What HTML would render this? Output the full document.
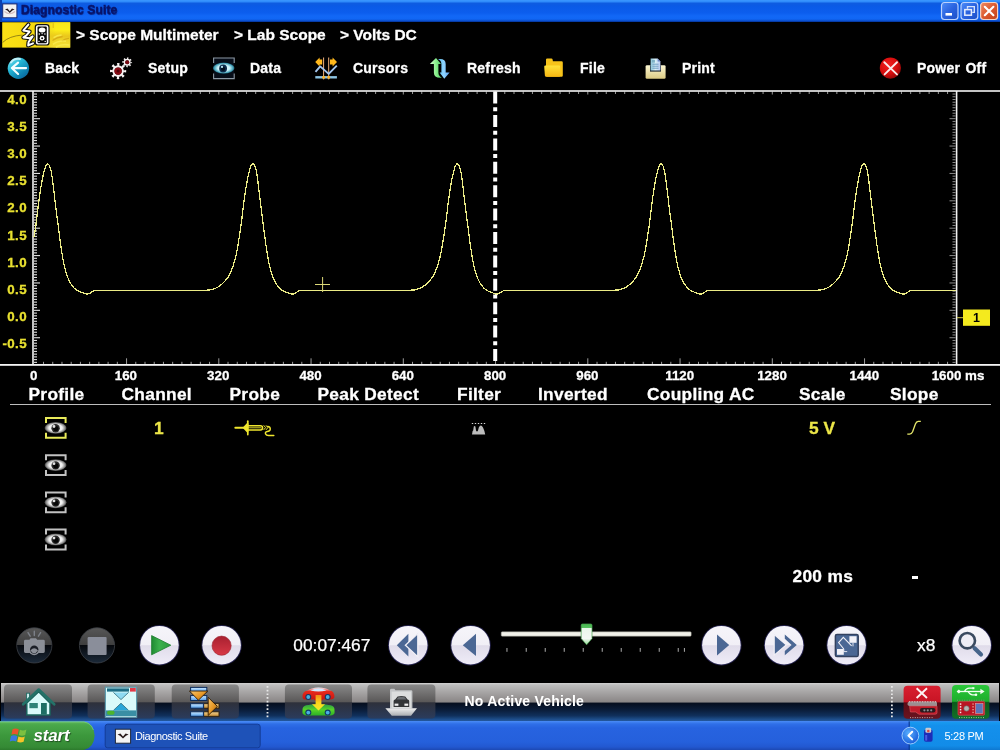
<!DOCTYPE html>
<html><head><meta charset="utf-8"><title>Diagnostic Suite</title>
<style>
*{box-sizing:border-box;margin:0;padding:0}
html,body{width:1000px;height:750px;overflow:hidden;background:#000}
body{position:relative;font-family:"Liberation Sans",sans-serif;color:#fff}
#wrap{position:absolute;left:0;top:0;width:1000px;height:750px;will-change:transform;transform:translateZ(0)}
.hd,.tb,.bc,.xl{-webkit-text-stroke:0.3px #fff}
.yl{-webkit-text-stroke:0.3px #e8e030}
.yv{-webkit-text-stroke:0.3px #ece648}
.abs{position:absolute}
#titlebar{position:absolute;left:0;top:0;width:1000px;height:22px;background:linear-gradient(to bottom,#3c98ff 0px,#2c88fa 2px,#0f5ce0 3px,#0a5ae6 6px,#0c5eee 13px,#1268f6 16px,#1066f4 19px,#0a4cca 21px,#032c86 22px)}
#titlebar .ttl{position:absolute;left:21px;top:3px;font-size:12px;font-weight:bold;color:#08146a;letter-spacing:0.15px;-webkit-text-stroke:0.45px #08146a;text-shadow:0.6px 0.6px 0.8px rgba(8,20,100,0.7);white-space:nowrap}
.bc{position:absolute;top:26px;font-size:15.5px;font-weight:bold;white-space:nowrap;line-height:18px}
.tb{position:absolute;top:60px;font-size:14px;font-weight:bold;white-space:nowrap;line-height:16px;letter-spacing:0.22px;word-spacing:1.2px}
.yl{position:absolute;left:0px;width:27px;text-align:right;letter-spacing:0.4px;font-size:13.33px;font-weight:bold;color:#e8e030;line-height:16px;white-space:nowrap}
.xl{position:absolute;top:368.3px;width:60px;text-align:center;font-size:13.33px;font-weight:bold;color:#fff;line-height:16px;white-space:nowrap}
.hd{position:absolute;top:384px;font-size:17.33px;font-weight:bold;white-space:nowrap;line-height:20px;letter-spacing:0.3px}
.yv{position:absolute;font-size:17.33px;font-weight:bold;color:#ece648;white-space:nowrap;line-height:20px}
svg{position:absolute;left:0;top:0;overflow:visible}
</style></head><body><div id="wrap">

<!-- ===== title bar ===== -->
<div id="titlebar">
  <div class="ttl">Diagnostic Suite</div>
</div>

<!-- ===== breadcrumb ===== -->
<div class="bc" style="left:76px">&gt; Scope Multimeter</div>
<div class="bc" style="left:234px">&gt; Lab Scope</div>
<div class="bc" style="left:340px">&gt; Volts DC</div>

<!-- ===== toolbar text ===== -->
<div class="tb" style="left:45px">Back</div>
<div class="tb" style="left:148px">Setup</div>
<div class="tb" style="left:250px">Data</div>
<div class="tb" style="left:353px">Cursors</div>
<div class="tb" style="left:467px">Refresh</div>
<div class="tb" style="left:580px">File</div>
<div class="tb" style="left:682px">Print</div>
<div class="tb" style="left:917px">Power Off</div>

<!-- ===== plot ===== -->
<div class="yl" style="top:91.5px">4.0</div><div class="yl" style="top:118.7px">3.5</div><div class="yl" style="top:145.9px">3.0</div><div class="yl" style="top:173.1px">2.5</div><div class="yl" style="top:200.3px">2.0</div><div class="yl" style="top:227.5px">1.5</div><div class="yl" style="top:254.7px">1.0</div><div class="yl" style="top:281.9px">0.5</div><div class="yl" style="top:309.1px">0.0</div><div class="yl" style="top:336.3px">-0.5</div>
<div class="xl" style="left:3.6px">0</div><div class="xl" style="left:95.9px">160</div><div class="xl" style="left:188.2px">320</div><div class="xl" style="left:280.5px">480</div><div class="xl" style="left:372.8px">640</div><div class="xl" style="left:465.1px">800</div><div class="xl" style="left:557.4px">960</div><div class="xl" style="left:649.7px">1120</div><div class="xl" style="left:742.0px">1280</div><div class="xl" style="left:834.3px">1440</div>
<div class="xl" style="left:928px">1600 ms</div>
<svg width="1000" height="750" viewBox="0 0 1000 750">
  <g stroke="#e0e0e0" stroke-width="1.1"><line x1="34.0" y1="94.04" x2="37.0" y2="94.04"/><line x1="34.0" y1="96.78" x2="37.0" y2="96.78"/><line x1="34.0" y1="99.51" x2="37.0" y2="99.51"/><line x1="34.0" y1="102.25" x2="37.0" y2="102.25"/><line x1="34.0" y1="104.99" x2="37.0" y2="104.99"/><line x1="34.0" y1="107.73" x2="37.0" y2="107.73"/><line x1="34.0" y1="110.47" x2="37.0" y2="110.47"/><line x1="34.0" y1="113.20" x2="37.0" y2="113.20"/><line x1="34.0" y1="115.94" x2="37.0" y2="115.94"/><line x1="34.0" y1="118.68" x2="40.0" y2="118.68"/><line x1="34.0" y1="121.42" x2="37.0" y2="121.42"/><line x1="34.0" y1="124.16" x2="37.0" y2="124.16"/><line x1="34.0" y1="126.89" x2="37.0" y2="126.89"/><line x1="34.0" y1="129.63" x2="37.0" y2="129.63"/><line x1="34.0" y1="132.37" x2="37.0" y2="132.37"/><line x1="34.0" y1="135.11" x2="37.0" y2="135.11"/><line x1="34.0" y1="137.85" x2="37.0" y2="137.85"/><line x1="34.0" y1="140.58" x2="37.0" y2="140.58"/><line x1="34.0" y1="143.32" x2="37.0" y2="143.32"/><line x1="34.0" y1="146.06" x2="40.0" y2="146.06"/><line x1="34.0" y1="148.80" x2="37.0" y2="148.80"/><line x1="34.0" y1="151.54" x2="37.0" y2="151.54"/><line x1="34.0" y1="154.27" x2="37.0" y2="154.27"/><line x1="34.0" y1="157.01" x2="37.0" y2="157.01"/><line x1="34.0" y1="159.75" x2="37.0" y2="159.75"/><line x1="34.0" y1="162.49" x2="37.0" y2="162.49"/><line x1="34.0" y1="165.23" x2="37.0" y2="165.23"/><line x1="34.0" y1="167.96" x2="37.0" y2="167.96"/><line x1="34.0" y1="170.70" x2="37.0" y2="170.70"/><line x1="34.0" y1="173.44" x2="40.0" y2="173.44"/><line x1="34.0" y1="176.18" x2="37.0" y2="176.18"/><line x1="34.0" y1="178.92" x2="37.0" y2="178.92"/><line x1="34.0" y1="181.65" x2="37.0" y2="181.65"/><line x1="34.0" y1="184.39" x2="37.0" y2="184.39"/><line x1="34.0" y1="187.13" x2="37.0" y2="187.13"/><line x1="34.0" y1="189.87" x2="37.0" y2="189.87"/><line x1="34.0" y1="192.61" x2="37.0" y2="192.61"/><line x1="34.0" y1="195.34" x2="37.0" y2="195.34"/><line x1="34.0" y1="198.08" x2="37.0" y2="198.08"/><line x1="34.0" y1="200.82" x2="40.0" y2="200.82"/><line x1="34.0" y1="203.56" x2="37.0" y2="203.56"/><line x1="34.0" y1="206.30" x2="37.0" y2="206.30"/><line x1="34.0" y1="209.03" x2="37.0" y2="209.03"/><line x1="34.0" y1="211.77" x2="37.0" y2="211.77"/><line x1="34.0" y1="214.51" x2="37.0" y2="214.51"/><line x1="34.0" y1="217.25" x2="37.0" y2="217.25"/><line x1="34.0" y1="219.99" x2="37.0" y2="219.99"/><line x1="34.0" y1="222.72" x2="37.0" y2="222.72"/><line x1="34.0" y1="225.46" x2="37.0" y2="225.46"/><line x1="34.0" y1="228.20" x2="40.0" y2="228.20"/><line x1="34.0" y1="230.94" x2="37.0" y2="230.94"/><line x1="34.0" y1="233.68" x2="37.0" y2="233.68"/><line x1="34.0" y1="236.41" x2="37.0" y2="236.41"/><line x1="34.0" y1="239.15" x2="37.0" y2="239.15"/><line x1="34.0" y1="241.89" x2="37.0" y2="241.89"/><line x1="34.0" y1="244.63" x2="37.0" y2="244.63"/><line x1="34.0" y1="247.37" x2="37.0" y2="247.37"/><line x1="34.0" y1="250.10" x2="37.0" y2="250.10"/><line x1="34.0" y1="252.84" x2="37.0" y2="252.84"/><line x1="34.0" y1="255.58" x2="40.0" y2="255.58"/><line x1="34.0" y1="258.32" x2="37.0" y2="258.32"/><line x1="34.0" y1="261.06" x2="37.0" y2="261.06"/><line x1="34.0" y1="263.79" x2="37.0" y2="263.79"/><line x1="34.0" y1="266.53" x2="37.0" y2="266.53"/><line x1="34.0" y1="269.27" x2="37.0" y2="269.27"/><line x1="34.0" y1="272.01" x2="37.0" y2="272.01"/><line x1="34.0" y1="274.75" x2="37.0" y2="274.75"/><line x1="34.0" y1="277.48" x2="37.0" y2="277.48"/><line x1="34.0" y1="280.22" x2="37.0" y2="280.22"/><line x1="34.0" y1="282.96" x2="40.0" y2="282.96"/><line x1="34.0" y1="285.70" x2="37.0" y2="285.70"/><line x1="34.0" y1="288.44" x2="37.0" y2="288.44"/><line x1="34.0" y1="291.17" x2="37.0" y2="291.17"/><line x1="34.0" y1="293.91" x2="37.0" y2="293.91"/><line x1="34.0" y1="296.65" x2="37.0" y2="296.65"/><line x1="34.0" y1="299.39" x2="37.0" y2="299.39"/><line x1="34.0" y1="302.13" x2="37.0" y2="302.13"/><line x1="34.0" y1="304.86" x2="37.0" y2="304.86"/><line x1="34.0" y1="307.60" x2="37.0" y2="307.60"/><line x1="34.0" y1="310.34" x2="40.0" y2="310.34"/><line x1="34.0" y1="313.08" x2="37.0" y2="313.08"/><line x1="34.0" y1="315.82" x2="37.0" y2="315.82"/><line x1="34.0" y1="318.55" x2="37.0" y2="318.55"/><line x1="34.0" y1="321.29" x2="37.0" y2="321.29"/><line x1="34.0" y1="324.03" x2="37.0" y2="324.03"/><line x1="34.0" y1="326.77" x2="37.0" y2="326.77"/><line x1="34.0" y1="329.51" x2="37.0" y2="329.51"/><line x1="34.0" y1="332.24" x2="37.0" y2="332.24"/><line x1="34.0" y1="334.98" x2="37.0" y2="334.98"/><line x1="34.0" y1="337.72" x2="40.0" y2="337.72"/><line x1="34.0" y1="340.46" x2="37.0" y2="340.46"/><line x1="34.0" y1="343.20" x2="37.0" y2="343.20"/><line x1="34.0" y1="345.93" x2="37.0" y2="345.93"/><line x1="34.0" y1="348.67" x2="37.0" y2="348.67"/><line x1="34.0" y1="351.41" x2="37.0" y2="351.41"/><line x1="34.0" y1="354.15" x2="37.0" y2="354.15"/><line x1="34.0" y1="356.89" x2="37.0" y2="356.89"/><line x1="34.0" y1="359.62" x2="37.0" y2="359.62"/><line x1="34.0" y1="362.36" x2="37.0" y2="362.36"/></g>
  <g stroke="#8c8c8c" stroke-width="1"><line x1="952.5" y1="94.04" x2="955.5" y2="94.04"/><line x1="952.5" y1="96.78" x2="955.5" y2="96.78"/><line x1="952.5" y1="99.51" x2="955.5" y2="99.51"/><line x1="952.5" y1="102.25" x2="955.5" y2="102.25"/><line x1="952.5" y1="104.99" x2="955.5" y2="104.99"/><line x1="952.5" y1="107.73" x2="955.5" y2="107.73"/><line x1="952.5" y1="110.47" x2="955.5" y2="110.47"/><line x1="952.5" y1="113.20" x2="955.5" y2="113.20"/><line x1="952.5" y1="115.94" x2="955.5" y2="115.94"/><line x1="949.5" y1="118.68" x2="955.5" y2="118.68"/><line x1="952.5" y1="121.42" x2="955.5" y2="121.42"/><line x1="952.5" y1="124.16" x2="955.5" y2="124.16"/><line x1="952.5" y1="126.89" x2="955.5" y2="126.89"/><line x1="952.5" y1="129.63" x2="955.5" y2="129.63"/><line x1="952.5" y1="132.37" x2="955.5" y2="132.37"/><line x1="952.5" y1="135.11" x2="955.5" y2="135.11"/><line x1="952.5" y1="137.85" x2="955.5" y2="137.85"/><line x1="952.5" y1="140.58" x2="955.5" y2="140.58"/><line x1="952.5" y1="143.32" x2="955.5" y2="143.32"/><line x1="949.5" y1="146.06" x2="955.5" y2="146.06"/><line x1="952.5" y1="148.80" x2="955.5" y2="148.80"/><line x1="952.5" y1="151.54" x2="955.5" y2="151.54"/><line x1="952.5" y1="154.27" x2="955.5" y2="154.27"/><line x1="952.5" y1="157.01" x2="955.5" y2="157.01"/><line x1="952.5" y1="159.75" x2="955.5" y2="159.75"/><line x1="952.5" y1="162.49" x2="955.5" y2="162.49"/><line x1="952.5" y1="165.23" x2="955.5" y2="165.23"/><line x1="952.5" y1="167.96" x2="955.5" y2="167.96"/><line x1="952.5" y1="170.70" x2="955.5" y2="170.70"/><line x1="949.5" y1="173.44" x2="955.5" y2="173.44"/><line x1="952.5" y1="176.18" x2="955.5" y2="176.18"/><line x1="952.5" y1="178.92" x2="955.5" y2="178.92"/><line x1="952.5" y1="181.65" x2="955.5" y2="181.65"/><line x1="952.5" y1="184.39" x2="955.5" y2="184.39"/><line x1="952.5" y1="187.13" x2="955.5" y2="187.13"/><line x1="952.5" y1="189.87" x2="955.5" y2="189.87"/><line x1="952.5" y1="192.61" x2="955.5" y2="192.61"/><line x1="952.5" y1="195.34" x2="955.5" y2="195.34"/><line x1="952.5" y1="198.08" x2="955.5" y2="198.08"/><line x1="949.5" y1="200.82" x2="955.5" y2="200.82"/><line x1="952.5" y1="203.56" x2="955.5" y2="203.56"/><line x1="952.5" y1="206.30" x2="955.5" y2="206.30"/><line x1="952.5" y1="209.03" x2="955.5" y2="209.03"/><line x1="952.5" y1="211.77" x2="955.5" y2="211.77"/><line x1="952.5" y1="214.51" x2="955.5" y2="214.51"/><line x1="952.5" y1="217.25" x2="955.5" y2="217.25"/><line x1="952.5" y1="219.99" x2="955.5" y2="219.99"/><line x1="952.5" y1="222.72" x2="955.5" y2="222.72"/><line x1="952.5" y1="225.46" x2="955.5" y2="225.46"/><line x1="949.5" y1="228.20" x2="955.5" y2="228.20"/><line x1="952.5" y1="230.94" x2="955.5" y2="230.94"/><line x1="952.5" y1="233.68" x2="955.5" y2="233.68"/><line x1="952.5" y1="236.41" x2="955.5" y2="236.41"/><line x1="952.5" y1="239.15" x2="955.5" y2="239.15"/><line x1="952.5" y1="241.89" x2="955.5" y2="241.89"/><line x1="952.5" y1="244.63" x2="955.5" y2="244.63"/><line x1="952.5" y1="247.37" x2="955.5" y2="247.37"/><line x1="952.5" y1="250.10" x2="955.5" y2="250.10"/><line x1="952.5" y1="252.84" x2="955.5" y2="252.84"/><line x1="949.5" y1="255.58" x2="955.5" y2="255.58"/><line x1="952.5" y1="258.32" x2="955.5" y2="258.32"/><line x1="952.5" y1="261.06" x2="955.5" y2="261.06"/><line x1="952.5" y1="263.79" x2="955.5" y2="263.79"/><line x1="952.5" y1="266.53" x2="955.5" y2="266.53"/><line x1="952.5" y1="269.27" x2="955.5" y2="269.27"/><line x1="952.5" y1="272.01" x2="955.5" y2="272.01"/><line x1="952.5" y1="274.75" x2="955.5" y2="274.75"/><line x1="952.5" y1="277.48" x2="955.5" y2="277.48"/><line x1="952.5" y1="280.22" x2="955.5" y2="280.22"/><line x1="949.5" y1="282.96" x2="955.5" y2="282.96"/><line x1="952.5" y1="285.70" x2="955.5" y2="285.70"/><line x1="952.5" y1="288.44" x2="955.5" y2="288.44"/><line x1="952.5" y1="291.17" x2="955.5" y2="291.17"/><line x1="952.5" y1="293.91" x2="955.5" y2="293.91"/><line x1="952.5" y1="296.65" x2="955.5" y2="296.65"/><line x1="952.5" y1="299.39" x2="955.5" y2="299.39"/><line x1="952.5" y1="302.13" x2="955.5" y2="302.13"/><line x1="952.5" y1="304.86" x2="955.5" y2="304.86"/><line x1="952.5" y1="307.60" x2="955.5" y2="307.60"/><line x1="949.5" y1="310.34" x2="955.5" y2="310.34"/><line x1="952.5" y1="313.08" x2="955.5" y2="313.08"/><line x1="952.5" y1="315.82" x2="955.5" y2="315.82"/><line x1="952.5" y1="318.55" x2="955.5" y2="318.55"/><line x1="952.5" y1="321.29" x2="955.5" y2="321.29"/><line x1="952.5" y1="324.03" x2="955.5" y2="324.03"/><line x1="952.5" y1="326.77" x2="955.5" y2="326.77"/><line x1="952.5" y1="329.51" x2="955.5" y2="329.51"/><line x1="952.5" y1="332.24" x2="955.5" y2="332.24"/><line x1="952.5" y1="334.98" x2="955.5" y2="334.98"/><line x1="949.5" y1="337.72" x2="955.5" y2="337.72"/><line x1="952.5" y1="340.46" x2="955.5" y2="340.46"/><line x1="952.5" y1="343.20" x2="955.5" y2="343.20"/><line x1="952.5" y1="345.93" x2="955.5" y2="345.93"/><line x1="952.5" y1="348.67" x2="955.5" y2="348.67"/><line x1="952.5" y1="351.41" x2="955.5" y2="351.41"/><line x1="952.5" y1="354.15" x2="955.5" y2="354.15"/><line x1="952.5" y1="356.89" x2="955.5" y2="356.89"/><line x1="952.5" y1="359.62" x2="955.5" y2="359.62"/><line x1="952.5" y1="362.36" x2="955.5" y2="362.36"/></g>
  <g stroke="#9a9a9a" stroke-width="1"><line x1="43.52" y1="361.8" x2="43.52" y2="364.3"/><line x1="43.52" y1="91.5" x2="43.52" y2="94.0"/><line x1="52.75" y1="361.8" x2="52.75" y2="364.3"/><line x1="52.75" y1="91.5" x2="52.75" y2="94.0"/><line x1="61.97" y1="361.8" x2="61.97" y2="364.3"/><line x1="61.97" y1="91.5" x2="61.97" y2="94.0"/><line x1="71.20" y1="361.8" x2="71.20" y2="364.3"/><line x1="71.20" y1="91.5" x2="71.20" y2="94.0"/><line x1="80.42" y1="361.8" x2="80.42" y2="364.3"/><line x1="80.42" y1="91.5" x2="80.42" y2="94.0"/><line x1="89.65" y1="361.8" x2="89.65" y2="364.3"/><line x1="89.65" y1="91.5" x2="89.65" y2="94.0"/><line x1="98.88" y1="361.8" x2="98.88" y2="364.3"/><line x1="98.88" y1="91.5" x2="98.88" y2="94.0"/><line x1="108.10" y1="361.8" x2="108.10" y2="364.3"/><line x1="108.10" y1="91.5" x2="108.10" y2="94.0"/><line x1="117.32" y1="361.8" x2="117.32" y2="364.3"/><line x1="117.32" y1="91.5" x2="117.32" y2="94.0"/><line x1="126.55" y1="358.3" x2="126.55" y2="364.3"/><line x1="126.55" y1="91.5" x2="126.55" y2="94.5"/><line x1="135.77" y1="361.8" x2="135.77" y2="364.3"/><line x1="135.77" y1="91.5" x2="135.77" y2="94.0"/><line x1="145.00" y1="361.8" x2="145.00" y2="364.3"/><line x1="145.00" y1="91.5" x2="145.00" y2="94.0"/><line x1="154.22" y1="361.8" x2="154.22" y2="364.3"/><line x1="154.22" y1="91.5" x2="154.22" y2="94.0"/><line x1="163.45" y1="361.8" x2="163.45" y2="364.3"/><line x1="163.45" y1="91.5" x2="163.45" y2="94.0"/><line x1="172.68" y1="361.8" x2="172.68" y2="364.3"/><line x1="172.68" y1="91.5" x2="172.68" y2="94.0"/><line x1="181.90" y1="361.8" x2="181.90" y2="364.3"/><line x1="181.90" y1="91.5" x2="181.90" y2="94.0"/><line x1="191.12" y1="361.8" x2="191.12" y2="364.3"/><line x1="191.12" y1="91.5" x2="191.12" y2="94.0"/><line x1="200.35" y1="361.8" x2="200.35" y2="364.3"/><line x1="200.35" y1="91.5" x2="200.35" y2="94.0"/><line x1="209.57" y1="361.8" x2="209.57" y2="364.3"/><line x1="209.57" y1="91.5" x2="209.57" y2="94.0"/><line x1="218.80" y1="358.3" x2="218.80" y2="364.3"/><line x1="218.80" y1="91.5" x2="218.80" y2="94.5"/><line x1="228.02" y1="361.8" x2="228.02" y2="364.3"/><line x1="228.02" y1="91.5" x2="228.02" y2="94.0"/><line x1="237.25" y1="361.8" x2="237.25" y2="364.3"/><line x1="237.25" y1="91.5" x2="237.25" y2="94.0"/><line x1="246.47" y1="361.8" x2="246.47" y2="364.3"/><line x1="246.47" y1="91.5" x2="246.47" y2="94.0"/><line x1="255.70" y1="361.8" x2="255.70" y2="364.3"/><line x1="255.70" y1="91.5" x2="255.70" y2="94.0"/><line x1="264.93" y1="361.8" x2="264.93" y2="364.3"/><line x1="264.93" y1="91.5" x2="264.93" y2="94.0"/><line x1="274.15" y1="361.8" x2="274.15" y2="364.3"/><line x1="274.15" y1="91.5" x2="274.15" y2="94.0"/><line x1="283.38" y1="361.8" x2="283.38" y2="364.3"/><line x1="283.38" y1="91.5" x2="283.38" y2="94.0"/><line x1="292.60" y1="361.8" x2="292.60" y2="364.3"/><line x1="292.60" y1="91.5" x2="292.60" y2="94.0"/><line x1="301.82" y1="361.8" x2="301.82" y2="364.3"/><line x1="301.82" y1="91.5" x2="301.82" y2="94.0"/><line x1="311.05" y1="358.3" x2="311.05" y2="364.3"/><line x1="311.05" y1="91.5" x2="311.05" y2="94.5"/><line x1="320.27" y1="361.8" x2="320.27" y2="364.3"/><line x1="320.27" y1="91.5" x2="320.27" y2="94.0"/><line x1="329.50" y1="361.8" x2="329.50" y2="364.3"/><line x1="329.50" y1="91.5" x2="329.50" y2="94.0"/><line x1="338.73" y1="361.8" x2="338.73" y2="364.3"/><line x1="338.73" y1="91.5" x2="338.73" y2="94.0"/><line x1="347.95" y1="361.8" x2="347.95" y2="364.3"/><line x1="347.95" y1="91.5" x2="347.95" y2="94.0"/><line x1="357.18" y1="361.8" x2="357.18" y2="364.3"/><line x1="357.18" y1="91.5" x2="357.18" y2="94.0"/><line x1="366.40" y1="361.8" x2="366.40" y2="364.3"/><line x1="366.40" y1="91.5" x2="366.40" y2="94.0"/><line x1="375.62" y1="361.8" x2="375.62" y2="364.3"/><line x1="375.62" y1="91.5" x2="375.62" y2="94.0"/><line x1="384.85" y1="361.8" x2="384.85" y2="364.3"/><line x1="384.85" y1="91.5" x2="384.85" y2="94.0"/><line x1="394.07" y1="361.8" x2="394.07" y2="364.3"/><line x1="394.07" y1="91.5" x2="394.07" y2="94.0"/><line x1="403.30" y1="358.3" x2="403.30" y2="364.3"/><line x1="403.30" y1="91.5" x2="403.30" y2="94.5"/><line x1="412.52" y1="361.8" x2="412.52" y2="364.3"/><line x1="412.52" y1="91.5" x2="412.52" y2="94.0"/><line x1="421.75" y1="361.8" x2="421.75" y2="364.3"/><line x1="421.75" y1="91.5" x2="421.75" y2="94.0"/><line x1="430.98" y1="361.8" x2="430.98" y2="364.3"/><line x1="430.98" y1="91.5" x2="430.98" y2="94.0"/><line x1="440.20" y1="361.8" x2="440.20" y2="364.3"/><line x1="440.20" y1="91.5" x2="440.20" y2="94.0"/><line x1="449.43" y1="361.8" x2="449.43" y2="364.3"/><line x1="449.43" y1="91.5" x2="449.43" y2="94.0"/><line x1="458.65" y1="361.8" x2="458.65" y2="364.3"/><line x1="458.65" y1="91.5" x2="458.65" y2="94.0"/><line x1="467.88" y1="361.8" x2="467.88" y2="364.3"/><line x1="467.88" y1="91.5" x2="467.88" y2="94.0"/><line x1="477.10" y1="361.8" x2="477.10" y2="364.3"/><line x1="477.10" y1="91.5" x2="477.10" y2="94.0"/><line x1="486.32" y1="361.8" x2="486.32" y2="364.3"/><line x1="486.32" y1="91.5" x2="486.32" y2="94.0"/><line x1="495.55" y1="358.3" x2="495.55" y2="364.3"/><line x1="495.55" y1="91.5" x2="495.55" y2="94.5"/><line x1="504.77" y1="361.8" x2="504.77" y2="364.3"/><line x1="504.77" y1="91.5" x2="504.77" y2="94.0"/><line x1="514.00" y1="361.8" x2="514.00" y2="364.3"/><line x1="514.00" y1="91.5" x2="514.00" y2="94.0"/><line x1="523.22" y1="361.8" x2="523.22" y2="364.3"/><line x1="523.22" y1="91.5" x2="523.22" y2="94.0"/><line x1="532.45" y1="361.8" x2="532.45" y2="364.3"/><line x1="532.45" y1="91.5" x2="532.45" y2="94.0"/><line x1="541.67" y1="361.8" x2="541.67" y2="364.3"/><line x1="541.67" y1="91.5" x2="541.67" y2="94.0"/><line x1="550.90" y1="361.8" x2="550.90" y2="364.3"/><line x1="550.90" y1="91.5" x2="550.90" y2="94.0"/><line x1="560.12" y1="361.8" x2="560.12" y2="364.3"/><line x1="560.12" y1="91.5" x2="560.12" y2="94.0"/><line x1="569.35" y1="361.8" x2="569.35" y2="364.3"/><line x1="569.35" y1="91.5" x2="569.35" y2="94.0"/><line x1="578.57" y1="361.8" x2="578.57" y2="364.3"/><line x1="578.57" y1="91.5" x2="578.57" y2="94.0"/><line x1="587.80" y1="358.3" x2="587.80" y2="364.3"/><line x1="587.80" y1="91.5" x2="587.80" y2="94.5"/><line x1="597.02" y1="361.8" x2="597.02" y2="364.3"/><line x1="597.02" y1="91.5" x2="597.02" y2="94.0"/><line x1="606.25" y1="361.8" x2="606.25" y2="364.3"/><line x1="606.25" y1="91.5" x2="606.25" y2="94.0"/><line x1="615.47" y1="361.8" x2="615.47" y2="364.3"/><line x1="615.47" y1="91.5" x2="615.47" y2="94.0"/><line x1="624.70" y1="361.8" x2="624.70" y2="364.3"/><line x1="624.70" y1="91.5" x2="624.70" y2="94.0"/><line x1="633.92" y1="361.8" x2="633.92" y2="364.3"/><line x1="633.92" y1="91.5" x2="633.92" y2="94.0"/><line x1="643.15" y1="361.8" x2="643.15" y2="364.3"/><line x1="643.15" y1="91.5" x2="643.15" y2="94.0"/><line x1="652.37" y1="361.8" x2="652.37" y2="364.3"/><line x1="652.37" y1="91.5" x2="652.37" y2="94.0"/><line x1="661.60" y1="361.8" x2="661.60" y2="364.3"/><line x1="661.60" y1="91.5" x2="661.60" y2="94.0"/><line x1="670.82" y1="361.8" x2="670.82" y2="364.3"/><line x1="670.82" y1="91.5" x2="670.82" y2="94.0"/><line x1="680.05" y1="358.3" x2="680.05" y2="364.3"/><line x1="680.05" y1="91.5" x2="680.05" y2="94.5"/><line x1="689.27" y1="361.8" x2="689.27" y2="364.3"/><line x1="689.27" y1="91.5" x2="689.27" y2="94.0"/><line x1="698.50" y1="361.8" x2="698.50" y2="364.3"/><line x1="698.50" y1="91.5" x2="698.50" y2="94.0"/><line x1="707.72" y1="361.8" x2="707.72" y2="364.3"/><line x1="707.72" y1="91.5" x2="707.72" y2="94.0"/><line x1="716.95" y1="361.8" x2="716.95" y2="364.3"/><line x1="716.95" y1="91.5" x2="716.95" y2="94.0"/><line x1="726.17" y1="361.8" x2="726.17" y2="364.3"/><line x1="726.17" y1="91.5" x2="726.17" y2="94.0"/><line x1="735.40" y1="361.8" x2="735.40" y2="364.3"/><line x1="735.40" y1="91.5" x2="735.40" y2="94.0"/><line x1="744.62" y1="361.8" x2="744.62" y2="364.3"/><line x1="744.62" y1="91.5" x2="744.62" y2="94.0"/><line x1="753.85" y1="361.8" x2="753.85" y2="364.3"/><line x1="753.85" y1="91.5" x2="753.85" y2="94.0"/><line x1="763.07" y1="361.8" x2="763.07" y2="364.3"/><line x1="763.07" y1="91.5" x2="763.07" y2="94.0"/><line x1="772.30" y1="358.3" x2="772.30" y2="364.3"/><line x1="772.30" y1="91.5" x2="772.30" y2="94.5"/><line x1="781.52" y1="361.8" x2="781.52" y2="364.3"/><line x1="781.52" y1="91.5" x2="781.52" y2="94.0"/><line x1="790.75" y1="361.8" x2="790.75" y2="364.3"/><line x1="790.75" y1="91.5" x2="790.75" y2="94.0"/><line x1="799.97" y1="361.8" x2="799.97" y2="364.3"/><line x1="799.97" y1="91.5" x2="799.97" y2="94.0"/><line x1="809.20" y1="361.8" x2="809.20" y2="364.3"/><line x1="809.20" y1="91.5" x2="809.20" y2="94.0"/><line x1="818.42" y1="361.8" x2="818.42" y2="364.3"/><line x1="818.42" y1="91.5" x2="818.42" y2="94.0"/><line x1="827.65" y1="361.8" x2="827.65" y2="364.3"/><line x1="827.65" y1="91.5" x2="827.65" y2="94.0"/><line x1="836.87" y1="361.8" x2="836.87" y2="364.3"/><line x1="836.87" y1="91.5" x2="836.87" y2="94.0"/><line x1="846.10" y1="361.8" x2="846.10" y2="364.3"/><line x1="846.10" y1="91.5" x2="846.10" y2="94.0"/><line x1="855.32" y1="361.8" x2="855.32" y2="364.3"/><line x1="855.32" y1="91.5" x2="855.32" y2="94.0"/><line x1="864.55" y1="358.3" x2="864.55" y2="364.3"/><line x1="864.55" y1="91.5" x2="864.55" y2="94.5"/><line x1="873.77" y1="361.8" x2="873.77" y2="364.3"/><line x1="873.77" y1="91.5" x2="873.77" y2="94.0"/><line x1="883.00" y1="361.8" x2="883.00" y2="364.3"/><line x1="883.00" y1="91.5" x2="883.00" y2="94.0"/><line x1="892.22" y1="361.8" x2="892.22" y2="364.3"/><line x1="892.22" y1="91.5" x2="892.22" y2="94.0"/><line x1="901.45" y1="361.8" x2="901.45" y2="364.3"/><line x1="901.45" y1="91.5" x2="901.45" y2="94.0"/><line x1="910.67" y1="361.8" x2="910.67" y2="364.3"/><line x1="910.67" y1="91.5" x2="910.67" y2="94.0"/><line x1="919.90" y1="361.8" x2="919.90" y2="364.3"/><line x1="919.90" y1="91.5" x2="919.90" y2="94.0"/><line x1="929.12" y1="361.8" x2="929.12" y2="364.3"/><line x1="929.12" y1="91.5" x2="929.12" y2="94.0"/><line x1="938.35" y1="361.8" x2="938.35" y2="364.3"/><line x1="938.35" y1="91.5" x2="938.35" y2="94.0"/><line x1="947.57" y1="361.8" x2="947.57" y2="364.3"/><line x1="947.57" y1="91.5" x2="947.57" y2="94.0"/></g>
  <rect x="0" y="90.2" width="1000" height="1.6" fill="#f4f4f4"/>
  <rect x="0" y="364" width="1000" height="1.8" fill="#f4f4f4"/>
  <rect x="32.2" y="91" width="1.6" height="274" fill="#f4f4f4"/>
  <rect x="955.8" y="91" width="1.6" height="274" fill="#f4f4f4"/>
  <path d="M34.0 237.3 L35.0 230.7 L36.0 224.0 L37.0 216.1 L38.0 207.6 L39.0 199.8 L40.0 192.8 L41.0 186.4 L42.0 180.8 L43.0 175.9 L44.0 171.7 L45.0 168.2 L46.0 165.4 L47.0 164.3 L48.0 164.0 L49.0 165.0 L50.0 167.2 L51.0 170.1 L52.0 176.3 L53.0 183.9 L54.0 192.1 L55.0 200.7 L56.0 208.8 L57.0 216.6 L58.0 224.3 L59.0 232.1 L60.0 239.7 L61.0 246.8 L62.0 253.5 L63.0 259.3 L64.0 264.3 L65.0 268.6 L66.0 272.4 L67.0 275.4 L68.0 278.0 L69.0 280.2 L70.0 282.2 L71.0 283.9 L72.0 285.3 L73.0 286.6 L74.0 287.9 L75.0 288.7 L76.0 289.5 L77.0 290.3 L78.0 290.8 L79.0 291.3 L80.0 291.7 L81.0 292.1 L82.0 292.5 L83.0 292.9 L84.0 293.2 L85.0 293.6 L86.0 293.9 L87.0 294.2 L88.0 294.0 L89.0 293.7 L90.0 293.2 L91.0 292.6 L92.0 291.9 L93.0 291.2 L94.0 290.7 L95.0 290.4 L96.0 290.3 L97.0 290.2 L98.0 290.2 L99.0 290.2 L100.0 290.3 L101.0 290.3 L102.0 290.3 L103.0 290.3 L104.0 290.3 L105.0 290.3 L106.0 290.3 L107.0 290.3 L108.0 290.3 L109.0 290.3 L110.0 290.3 L111.0 290.3 L112.0 290.4 L113.0 290.4 L114.0 290.4 L115.0 290.4 L116.0 290.4 L117.0 290.4 L118.0 290.4 L119.0 290.4 L120.0 290.4 L121.0 290.4 L122.0 290.4 L123.0 290.4 L124.0 290.4 L125.0 290.4 L126.0 290.4 L127.0 290.4 L128.0 290.4 L129.0 290.4 L130.0 290.4 L131.0 290.4 L132.0 290.4 L133.0 290.4 L134.0 290.4 L135.0 290.4 L136.0 290.4 L137.0 290.4 L138.0 290.4 L139.0 290.4 L140.0 290.4 L141.0 290.4 L142.0 290.4 L143.0 290.4 L144.0 290.4 L145.0 290.4 L146.0 290.4 L147.0 290.4 L148.0 290.4 L149.0 290.4 L150.0 290.4 L151.0 290.4 L152.0 290.4 L153.0 290.4 L154.0 290.4 L155.0 290.4 L156.0 290.4 L157.0 290.4 L158.0 290.4 L159.0 290.4 L160.0 290.4 L161.0 290.4 L162.0 290.4 L163.0 290.4 L164.0 290.4 L165.0 290.4 L166.0 290.4 L167.0 290.4 L168.0 290.4 L169.0 290.4 L170.0 290.4 L171.0 290.4 L172.0 290.4 L173.0 290.4 L174.0 290.4 L175.0 290.4 L176.0 290.4 L177.0 290.4 L178.0 290.4 L179.0 290.4 L180.0 290.4 L181.0 290.4 L182.0 290.4 L183.0 290.4 L184.0 290.4 L185.0 290.4 L186.0 290.4 L187.0 290.4 L188.0 290.4 L189.0 290.4 L190.0 290.4 L191.0 290.4 L192.0 290.4 L193.0 290.4 L194.0 290.4 L195.0 290.4 L196.0 290.4 L197.0 290.3 L198.0 290.3 L199.0 290.3 L200.0 290.3 L201.0 290.3 L202.0 290.3 L203.0 290.3 L204.0 290.2 L205.0 290.2 L206.0 290.2 L207.0 290.1 L208.0 290.1 L209.0 290.1 L210.0 290.0 L211.0 289.7 L212.0 289.4 L213.0 289.1 L214.0 288.9 L215.0 288.5 L216.0 288.0 L217.0 287.5 L218.0 287.0 L219.0 286.4 L220.0 285.6 L221.0 284.9 L222.0 284.1 L223.0 283.1 L224.0 282.1 L225.0 281.1 L226.0 279.8 L227.0 278.5 L228.0 277.2 L229.0 275.5 L230.0 273.6 L231.0 271.4 L232.0 268.8 L233.0 266.1 L234.0 262.8 L235.0 259.3 L236.0 255.5 L237.0 250.4 L238.0 244.8 L239.0 238.7 L240.0 232.1 L241.0 225.4 L242.0 217.7 L243.0 209.3 L244.0 201.2 L245.0 194.2 L246.0 187.7 L247.0 181.9 L248.0 176.8 L249.0 172.5 L250.0 168.8 L251.0 165.6 L252.0 164.5 L253.0 163.8 L254.0 164.8 L255.0 166.6 L256.0 169.6 L257.0 175.0 L258.0 182.3 L259.0 190.5 L260.0 199.0 L261.0 207.3 L262.0 215.1 L263.0 222.7 L264.0 230.5 L265.0 238.2 L266.0 245.4 L267.0 252.2 L268.0 258.2 L269.0 263.3 L270.0 267.8 L271.0 271.6 L272.0 274.8 L273.0 277.5 L274.0 279.8 L275.0 281.8 L276.0 283.5 L277.0 285.1 L278.0 286.3 L279.0 287.6 L280.0 288.5 L281.0 289.3 L282.0 290.2 L283.0 290.7 L284.0 291.2 L285.0 291.6 L286.0 292.1 L287.0 292.4 L288.0 292.8 L289.0 293.2 L290.0 293.5 L291.0 293.9 L292.0 294.2 L293.0 294.0 L294.0 293.8 L295.0 293.3 L296.0 292.7 L297.0 292.0 L298.0 291.3 L299.0 290.8 L300.0 290.4 L301.0 290.3 L302.0 290.2 L303.0 290.2 L304.0 290.2 L305.0 290.3 L306.0 290.3 L307.0 290.3 L308.0 290.3 L309.0 290.3 L310.0 290.3 L311.0 290.3 L312.0 290.3 L313.0 290.3 L314.0 290.3 L315.0 290.3 L316.0 290.3 L317.0 290.4 L318.0 290.4 L319.0 290.4 L320.0 290.4 L321.0 290.4 L322.0 290.4 L323.0 290.4 L324.0 290.4 L325.0 290.4 L326.0 290.4 L327.0 290.4 L328.0 290.4 L329.0 290.4 L330.0 290.4 L331.0 290.4 L332.0 290.4 L333.0 290.4 L334.0 290.4 L335.0 290.4 L336.0 290.4 L337.0 290.4 L338.0 290.4 L339.0 290.4 L340.0 290.4 L341.0 290.4 L342.0 290.4 L343.0 290.4 L344.0 290.4 L345.0 290.4 L346.0 290.4 L347.0 290.4 L348.0 290.4 L349.0 290.4 L350.0 290.4 L351.0 290.4 L352.0 290.4 L353.0 290.4 L354.0 290.4 L355.0 290.4 L356.0 290.4 L357.0 290.4 L358.0 290.4 L359.0 290.4 L360.0 290.4 L361.0 290.4 L362.0 290.4 L363.0 290.4 L364.0 290.4 L365.0 290.4 L366.0 290.4 L367.0 290.4 L368.0 290.4 L369.0 290.4 L370.0 290.4 L371.0 290.4 L372.0 290.4 L373.0 290.4 L374.0 290.4 L375.0 290.4 L376.0 290.4 L377.0 290.4 L378.0 290.4 L379.0 290.4 L380.0 290.4 L381.0 290.4 L382.0 290.4 L383.0 290.4 L384.0 290.4 L385.0 290.4 L386.0 290.4 L387.0 290.4 L388.0 290.4 L389.0 290.4 L390.0 290.4 L391.0 290.4 L392.0 290.4 L393.0 290.4 L394.0 290.4 L395.0 290.4 L396.0 290.4 L397.0 290.4 L398.0 290.4 L399.0 290.4 L400.0 290.4 L401.0 290.4 L402.0 290.3 L403.0 290.3 L404.0 290.3 L405.0 290.3 L406.0 290.3 L407.0 290.3 L408.0 290.2 L409.0 290.2 L410.0 290.2 L411.0 290.1 L412.0 290.1 L413.0 290.1 L414.0 290.0 L415.0 289.8 L416.0 289.5 L417.0 289.3 L418.0 289.0 L419.0 288.7 L420.0 288.2 L421.0 287.7 L422.0 287.2 L423.0 286.6 L424.0 285.9 L425.0 285.2 L426.0 284.5 L427.0 283.5 L428.0 282.5 L429.0 281.5 L430.0 280.4 L431.0 279.1 L432.0 277.7 L433.0 276.3 L434.0 274.3 L435.0 272.4 L436.0 269.9 L437.0 267.3 L438.0 264.1 L439.0 260.7 L440.0 257.0 L441.0 252.4 L442.0 247.1 L443.0 241.3 L444.0 234.7 L445.0 228.1 L446.0 221.0 L447.0 212.8 L448.0 204.2 L449.0 197.0 L450.0 190.2 L451.0 183.9 L452.0 178.8 L453.0 174.2 L454.0 170.1 L455.0 166.9 L456.0 165.0 L457.0 163.8 L458.0 164.4 L459.0 165.4 L460.0 168.4 L461.0 172.4 L462.0 179.2 L463.0 187.2 L464.0 195.5 L465.0 204.1 L466.0 212.0 L467.0 219.6 L468.0 227.4 L469.0 235.1 L470.0 242.6 L471.0 249.5 L472.0 256.1 L473.0 261.5 L474.0 266.1 L475.0 270.1 L476.0 273.6 L477.0 276.5 L478.0 278.9 L479.0 281.1 L480.0 282.9 L481.0 284.6 L482.0 285.8 L483.0 287.1 L484.0 288.2 L485.0 289.0 L486.0 289.8 L487.0 290.5 L488.0 291.0 L489.0 291.5 L490.0 291.9 L491.0 292.3 L492.0 292.6 L493.0 293.0 L494.0 293.4 L495.0 293.7 L496.0 294.1 L497.0 294.1 L498.0 293.9 L499.0 293.6 L500.0 292.9 L501.0 292.3 L502.0 291.6 L503.0 291.0 L504.0 290.5 L505.0 290.3 L506.0 290.2 L507.0 290.2 L508.0 290.2 L509.0 290.2 L510.0 290.3 L511.0 290.3 L512.0 290.3 L513.0 290.3 L514.0 290.3 L515.0 290.3 L516.0 290.3 L517.0 290.3 L518.0 290.3 L519.0 290.3 L520.0 290.3 L521.0 290.4 L522.0 290.4 L523.0 290.4 L524.0 290.4 L525.0 290.4 L526.0 290.4 L527.0 290.4 L528.0 290.4 L529.0 290.4 L530.0 290.4 L531.0 290.4 L532.0 290.4 L533.0 290.4 L534.0 290.4 L535.0 290.4 L536.0 290.4 L537.0 290.4 L538.0 290.4 L539.0 290.4 L540.0 290.4 L541.0 290.4 L542.0 290.4 L543.0 290.4 L544.0 290.4 L545.0 290.4 L546.0 290.4 L547.0 290.4 L548.0 290.4 L549.0 290.4 L550.0 290.4 L551.0 290.4 L552.0 290.4 L553.0 290.4 L554.0 290.4 L555.0 290.4 L556.0 290.4 L557.0 290.4 L558.0 290.4 L559.0 290.4 L560.0 290.4 L561.0 290.4 L562.0 290.4 L563.0 290.4 L564.0 290.4 L565.0 290.4 L566.0 290.4 L567.0 290.4 L568.0 290.4 L569.0 290.4 L570.0 290.4 L571.0 290.4 L572.0 290.4 L573.0 290.4 L574.0 290.4 L575.0 290.4 L576.0 290.4 L577.0 290.4 L578.0 290.4 L579.0 290.4 L580.0 290.4 L581.0 290.4 L582.0 290.4 L583.0 290.4 L584.0 290.4 L585.0 290.4 L586.0 290.4 L587.0 290.4 L588.0 290.4 L589.0 290.4 L590.0 290.4 L591.0 290.4 L592.0 290.4 L593.0 290.4 L594.0 290.4 L595.0 290.4 L596.0 290.4 L597.0 290.4 L598.0 290.4 L599.0 290.4 L600.0 290.4 L601.0 290.4 L602.0 290.4 L603.0 290.4 L604.0 290.4 L605.0 290.3 L606.0 290.3 L607.0 290.3 L608.0 290.3 L609.0 290.3 L610.0 290.3 L611.0 290.3 L612.0 290.2 L613.0 290.2 L614.0 290.2 L615.0 290.1 L616.0 290.1 L617.0 290.1 L618.0 290.0 L619.0 289.8 L620.0 289.5 L621.0 289.2 L622.0 288.9 L623.0 288.6 L624.0 288.1 L625.0 287.6 L626.0 287.1 L627.0 286.5 L628.0 285.8 L629.0 285.1 L630.0 284.3 L631.0 283.3 L632.0 282.3 L633.0 281.3 L634.0 280.1 L635.0 278.8 L636.0 277.5 L637.0 275.9 L638.0 273.9 L639.0 271.9 L640.0 269.4 L641.0 266.7 L642.0 263.5 L643.0 260.0 L644.0 256.3 L645.0 251.4 L646.0 246.0 L647.0 240.0 L648.0 233.4 L649.0 226.7 L650.0 219.4 L651.0 211.1 L652.0 202.6 L653.0 195.6 L654.0 189.0 L655.0 182.9 L656.0 177.8 L657.0 173.4 L658.0 169.5 L659.0 166.3 L660.0 164.7 L661.0 163.6 L662.0 164.6 L663.0 166.0 L664.0 169.0 L665.0 173.7 L666.0 180.8 L667.0 188.8 L668.0 197.2 L669.0 205.7 L670.0 213.6 L671.0 221.2 L672.0 228.9 L673.0 236.6 L674.0 244.0 L675.0 250.8 L676.0 257.2 L677.0 262.4 L678.0 267.1 L679.0 270.9 L680.0 274.2 L681.0 277.1 L682.0 279.3 L683.0 281.5 L684.0 283.2 L685.0 284.8 L686.0 286.1 L687.0 287.4 L688.0 288.4 L689.0 289.2 L690.0 290.0 L691.0 290.6 L692.0 291.1 L693.0 291.6 L694.0 292.0 L695.0 292.4 L696.0 292.7 L697.0 293.1 L698.0 293.4 L699.0 293.8 L700.0 294.1 L701.0 294.0 L702.0 293.8 L703.0 293.4 L704.0 292.8 L705.0 292.1 L706.0 291.4 L707.0 290.9 L708.0 290.4 L709.0 290.3 L710.0 290.2 L711.0 290.2 L712.0 290.2 L713.0 290.2 L714.0 290.3 L715.0 290.3 L716.0 290.3 L717.0 290.3 L718.0 290.3 L719.0 290.3 L720.0 290.3 L721.0 290.3 L722.0 290.3 L723.0 290.3 L724.0 290.3 L725.0 290.4 L726.0 290.4 L727.0 290.4 L728.0 290.4 L729.0 290.4 L730.0 290.4 L731.0 290.4 L732.0 290.4 L733.0 290.4 L734.0 290.4 L735.0 290.4 L736.0 290.4 L737.0 290.4 L738.0 290.4 L739.0 290.4 L740.0 290.4 L741.0 290.4 L742.0 290.4 L743.0 290.4 L744.0 290.4 L745.0 290.4 L746.0 290.4 L747.0 290.4 L748.0 290.4 L749.0 290.4 L750.0 290.4 L751.0 290.4 L752.0 290.4 L753.0 290.4 L754.0 290.4 L755.0 290.4 L756.0 290.4 L757.0 290.4 L758.0 290.4 L759.0 290.4 L760.0 290.4 L761.0 290.4 L762.0 290.4 L763.0 290.4 L764.0 290.4 L765.0 290.4 L766.0 290.4 L767.0 290.4 L768.0 290.4 L769.0 290.4 L770.0 290.4 L771.0 290.4 L772.0 290.4 L773.0 290.4 L774.0 290.4 L775.0 290.4 L776.0 290.4 L777.0 290.4 L778.0 290.4 L779.0 290.4 L780.0 290.4 L781.0 290.4 L782.0 290.4 L783.0 290.4 L784.0 290.4 L785.0 290.4 L786.0 290.4 L787.0 290.4 L788.0 290.4 L789.0 290.4 L790.0 290.4 L791.0 290.4 L792.0 290.4 L793.0 290.4 L794.0 290.4 L795.0 290.4 L796.0 290.4 L797.0 290.4 L798.0 290.4 L799.0 290.4 L800.0 290.4 L801.0 290.4 L802.0 290.4 L803.0 290.4 L804.0 290.4 L805.0 290.4 L806.0 290.4 L807.0 290.4 L808.0 290.3 L809.0 290.3 L810.0 290.3 L811.0 290.3 L812.0 290.3 L813.0 290.3 L814.0 290.3 L815.0 290.2 L816.0 290.2 L817.0 290.2 L818.0 290.1 L819.0 290.1 L820.0 290.1 L821.0 290.0 L822.0 289.7 L823.0 289.4 L824.0 289.1 L825.0 288.9 L826.0 288.5 L827.0 288.0 L828.0 287.5 L829.0 287.0 L830.0 286.4 L831.0 285.6 L832.0 284.9 L833.0 284.1 L834.0 283.1 L835.0 282.1 L836.0 281.1 L837.0 279.8 L838.0 278.5 L839.0 277.2 L840.0 275.5 L841.0 273.6 L842.0 271.4 L843.0 268.8 L844.0 266.1 L845.0 262.8 L846.0 259.3 L847.0 255.5 L848.0 250.4 L849.0 244.8 L850.0 238.7 L851.0 232.1 L852.0 225.4 L853.0 217.7 L854.0 209.3 L855.0 201.2 L856.0 194.2 L857.0 187.7 L858.0 181.9 L859.0 176.8 L860.0 172.5 L861.0 168.8 L862.0 165.6 L863.0 164.5 L864.0 163.8 L865.0 164.8 L866.0 166.6 L867.0 169.6 L868.0 175.0 L869.0 182.3 L870.0 190.5 L871.0 199.0 L872.0 207.3 L873.0 215.1 L874.0 222.7 L875.0 230.5 L876.0 238.2 L877.0 245.4 L878.0 252.2 L879.0 258.2 L880.0 263.3 L881.0 267.8 L882.0 271.6 L883.0 274.8 L884.0 277.5 L885.0 279.8 L886.0 281.8 L887.0 283.5 L888.0 285.1 L889.0 286.3 L890.0 287.6 L891.0 288.5 L892.0 289.3 L893.0 290.2 L894.0 290.7 L895.0 291.2 L896.0 291.6 L897.0 292.1 L898.0 292.4 L899.0 292.8 L900.0 293.2 L901.0 293.5 L902.0 293.9 L903.0 294.2 L904.0 294.0 L905.0 293.8 L906.0 293.3 L907.0 292.7 L908.0 292.0 L909.0 291.3 L910.0 290.8 L911.0 290.4 L912.0 290.3 L913.0 290.2 L914.0 290.2 L915.0 290.2 L916.0 290.3 L917.0 290.3 L918.0 290.3 L919.0 290.3 L920.0 290.3 L921.0 290.3 L922.0 290.3 L923.0 290.3 L924.0 290.3 L925.0 290.3 L926.0 290.3 L927.0 290.3 L928.0 290.4 L929.0 290.4 L930.0 290.4 L931.0 290.4 L932.0 290.4 L933.0 290.4 L934.0 290.4 L935.0 290.4 L936.0 290.4 L937.0 290.4 L938.0 290.4 L939.0 290.4 L940.0 290.4 L941.0 290.4 L942.0 290.4 L943.0 290.4 L944.0 290.4 L945.0 290.4 L946.0 290.4 L947.0 290.4 L948.0 290.4 L949.0 290.4 L950.0 290.4 L951.0 290.4 L952.0 290.4 L953.0 290.4 L954.0 290.4 L955.0 290.4 L956.0 290.4" fill="none" stroke="#ecec86" stroke-width="1.25" stroke-linejoin="round" shape-rendering="crispEdges"/>
  <!-- cursor -->
  <line x1="495.2" y1="91.6" x2="495.2" y2="364" stroke="#fff" stroke-width="4" stroke-dasharray="12 3.7 4 3.7"/>
  <!-- plus -->
  <path d="M315 284.5H330M322.6 277V292" stroke="#dcd878" stroke-width="1" fill="none"/>
  <!-- ch marker -->
  <line x1="957" y1="317.7" x2="963" y2="317.7" stroke="#cfc84a" stroke-width="1"/>
  <rect x="963" y="309.5" width="27" height="16.3" fill="#f4ea1e"/>
</svg>
<div class="abs" style="left:963px;top:310px;width:27px;text-align:center;font-size:12.5px;font-weight:bold;color:#000;line-height:16px">1</div>

<!-- ===== table header ===== -->
<div class="hd" style="left:28.5px">Profile</div>
<div class="hd" style="left:121.5px">Channel</div>
<div class="hd" style="left:229.5px">Probe</div>
<div class="hd" style="left:317.5px">Peak Detect</div>
<div class="hd" style="left:457px">Filter</div>
<div class="hd" style="left:538px">Inverted</div>
<div class="hd" style="left:647px">Coupling AC</div>
<div class="hd" style="left:799px">Scale</div>
<div class="hd" style="left:890px">Slope</div>
<div class="abs" style="left:10px;top:404px;width:981px;height:1px;background:#bdbdbd"></div>

<div class="yv" style="left:154px;top:417.5px">1</div>
<div class="yv" style="left:809px;top:417.5px">5 V</div>
<div class="hd" style="left:792.5px;top:565.5px">200 ms</div>
<div class="abs" style="left:911.5px;top:576.2px;width:6.5px;height:2.6px;background:#fff"></div>

<!-- ===== time ===== -->
<div class="abs" style="left:293.3px;top:634.6px;font-size:17.33px;line-height:20px;white-space:nowrap;-webkit-text-stroke:0.25px #fff">00:07:467</div>
<div class="abs" style="left:917px;top:634.6px;font-size:17.33px;line-height:20px;white-space:nowrap;-webkit-text-stroke:0.25px #fff">x8</div>

<!-- ===== app bar ===== -->
<div id="appbar" class="abs" style="left:1px;top:682.5px;width:998px;height:38.5px;background:linear-gradient(to bottom,#d0d0d0 0%,#bcbcbc 6%,#a6a4a4 25%,#8a8686 50%,#060e1e 53%,#0a1c38 70%,#10305c 86%,#1c4c88 95%,#2458a0 100%)"></div>
<div class="abs" style="left:464.5px;top:693px;font-size:14px;font-weight:bold;line-height:16px;white-space:nowrap;letter-spacing:0.2px">No Active Vehicle</div>

<!-- ===== taskbar ===== -->
<div id="taskbar" class="abs" style="left:0;top:721px;width:1000px;height:29px;background:linear-gradient(to bottom,#4a8cf6 0px,#2f6fe8 3px,#2763e0 7px,#2560dc 21px,#2258d0 26px,#1c48b4 29px)"></div>

<!-- ===== title bar icon & buttons ===== -->
<svg width="1000" height="52" viewBox="0 0 1000 52">
  <defs>
    <linearGradient id="gBtnB" x1="0" y1="0" x2="1" y2="1"><stop offset="0" stop-color="#4d8df8"/><stop offset="0.5" stop-color="#2a63e0"/><stop offset="1" stop-color="#1c4ec6"/></linearGradient>
    <linearGradient id="gBtnR" x1="0" y1="0" x2="1" y2="1"><stop offset="0" stop-color="#ee8a62"/><stop offset="0.5" stop-color="#dc5a30"/><stop offset="1" stop-color="#c04018"/></linearGradient>
    <linearGradient id="gFade" x1="0" y1="0" x2="1" y2="0"><stop offset="0" stop-color="#000"/><stop offset="0.45" stop-color="#fff"/><stop offset="1" stop-color="#fff"/></linearGradient>
    <mask id="mFade" maskUnits="userSpaceOnUse" x="44" y="22" width="27" height="26"><rect x="44" y="22" width="27" height="26" fill="url(#gFade)"/></mask>
    <linearGradient id="gYelR" x1="0" y1="0" x2="0" y2="1"><stop offset="0" stop-color="#f9e81c"/><stop offset="0.3" stop-color="#fdee1a"/><stop offset="0.55" stop-color="#e9c61c"/><stop offset="0.75" stop-color="#f0d82c"/><stop offset="1" stop-color="#f3e036"/></linearGradient>
    <linearGradient id="gYel" x1="0" y1="0" x2="1" y2="0"><stop offset="0" stop-color="#fbe116"/><stop offset="0.45" stop-color="#f5d90f"/><stop offset="0.7" stop-color="#ecd01c"/><stop offset="1" stop-color="#f1d61a"/></linearGradient>
  </defs>
  <rect x="0" y="0" width="2" height="22" fill="#0a40b0"/>
  <!-- app icon -->
  <rect x="2.7" y="3.9" width="14.2" height="13.9" fill="#f2f2f2" stroke="#1a2a70" stroke-width="1"/>
  <path d="M5 9.5 L7.5 8.6 L9.8 11.2 L12 8.6 L14.6 9.5 L12.3 10.6 L9.8 13 L7.3 10.6 Z" fill="#2a1a1a"/>
  <path d="M4.5 11.5 Q9.8 16 15 11.5" fill="none" stroke="#c8a8a8" stroke-width="1.2" opacity="0.7"/>
  <!-- window buttons -->
  <rect x="941.5" y="2.5" width="16.5" height="17" rx="3" fill="url(#gBtnB)" stroke="#bcd2fc" stroke-width="1.2"/>
  <rect x="945.5" y="13" width="6.5" height="2.6" fill="#fff"/>
  <rect x="961" y="2.5" width="16.8" height="17" rx="3" fill="url(#gBtnB)" stroke="#bcd2fc" stroke-width="1.2"/>
  <path d="M967.5 8.8V6.6H974.3V12.4H972.2" fill="none" stroke="#d4e2fc" stroke-width="1.4"/>
  <rect x="964.8" y="9.6" width="6.6" height="5.6" fill="none" stroke="#e4ecfc" stroke-width="1.5"/>
  <rect x="980.6" y="2.5" width="17" height="17" rx="3" fill="url(#gBtnR)" stroke="#f2d2c4" stroke-width="1.2"/>
  <path d="M984.8 6.8L993.4 15.2M993.4 6.8L984.8 15.2" stroke="#fff" stroke-width="2.1" stroke-linecap="round"/>
  <!-- breadcrumb yellow icon -->
  <rect x="2.2" y="22.3" width="68" height="25.3" fill="url(#gYel)"/>
  <path d="M2.6 42.5 Q9 36 22.5 35" fill="none" stroke="#8c7c12" stroke-width="0.9"/>
  <rect x="44" y="22.3" width="26.2" height="25.3" fill="url(#gYelR)" mask="url(#mFade)"/>
  <g fill="none" stroke="#d2a414" stroke-width="1.3" opacity="0.75">
    <path d="M52.5 40.6 Q57 37 62.6 36.6"/><path d="M62 41 Q65 38.6 69 38.4"/><path d="M53.2 23.2V28" stroke-width="0.9"/>
  </g>
  <g fill="none" stroke="#fbec50" stroke-width="1.5" opacity="0.8">
    <path d="M53 44.4 Q58 40.4 66 41.2"/><path d="M56 47 Q62 43.4 69.6 45"/><path d="M53.6 37.6 Q57 35.2 61.6 35"/>
  </g>
  <!-- multimeter -->
  <rect x="35.3" y="24.6" width="13.7" height="20.4" rx="2.6" fill="#fff" stroke="#111" stroke-width="1.2"/>
  <rect x="37.5" y="26.4" width="9.3" height="16.8" rx="1" fill="#0a0a0a"/>
  <ellipse cx="42.1" cy="29.9" rx="3.4" ry="2.5" fill="#fff"/>
  <circle cx="42.1" cy="38.2" r="2.4" fill="#fff"/>
  <circle cx="42.1" cy="38.2" r="1" fill="#111"/>
  <circle cx="39.3" cy="34" r="0.7" fill="#fff"/><circle cx="42.1" cy="33.6" r="0.7" fill="#fff"/><circle cx="44.9" cy="34" r="0.7" fill="#fff"/>
  <circle cx="39" cy="41.4" r="0.7" fill="#fff"/><circle cx="45.2" cy="41.4" r="0.7" fill="#fff"/>
  <!-- squiggle -->
  <path id="sq" d="M28.4 24.6 L23.4 30.4 L29.6 31.6 L26.4 35.4 L23.4 37.4 L29.8 38.2 L32.6 36.4 L28.6 42 L28.2 45.4 L33 43.4" fill="none" stroke="#111" stroke-width="4.2" stroke-linejoin="round" stroke-linecap="round"/>
  <path d="M28.4 24.6 L23.4 30.4 L29.6 31.6 L26.4 35.4 L23.4 37.4 L29.8 38.2 L32.6 36.4 L28.6 42 L28.2 45.4 L33 43.4" fill="none" stroke="#fff" stroke-width="2" stroke-linejoin="round" stroke-linecap="round"/>
</svg>

<!-- ===== toolbar icons ===== -->
<svg width="1000" height="90" viewBox="0 0 1000 90">
  <defs>
    <linearGradient id="gBack" x1="0.1" y1="0" x2="0.9" y2="1"><stop offset="0" stop-color="#7fe6f2"/><stop offset="0.35" stop-color="#25b7d6"/><stop offset="0.7" stop-color="#0e86b4"/><stop offset="1" stop-color="#0a5d96"/></linearGradient>
    <radialGradient id="gPow" cx="0.4" cy="0.35" r="0.7"><stop offset="0" stop-color="#f42020"/><stop offset="0.6" stop-color="#d60c0c"/><stop offset="1" stop-color="#8e0606"/></radialGradient>
    <radialGradient id="gEye" cx="0.5" cy="0.5" r="0.5"><stop offset="0" stop-color="#f2feff"/><stop offset="0.55" stop-color="#c8f0f8"/><stop offset="0.85" stop-color="#4aa6bc"/><stop offset="1" stop-color="#1a5a70"/></radialGradient>
    <linearGradient id="gGrn" x1="0" y1="0" x2="1" y2="0"><stop offset="0" stop-color="#d8ffd0"/><stop offset="0.5" stop-color="#8cf08c"/><stop offset="1" stop-color="#4ccf6a"/></linearGradient>
    <linearGradient id="gBlu" x1="0" y1="0" x2="1" y2="0"><stop offset="0" stop-color="#58c0f0"/><stop offset="0.5" stop-color="#90d4ff"/><stop offset="1" stop-color="#5aa0f0"/></linearGradient>
    <linearGradient id="gFold" x1="0" y1="0" x2="0" y2="1"><stop offset="0" stop-color="#ffe23a"/><stop offset="1" stop-color="#f6b612"/></linearGradient>
    <linearGradient id="gTray" x1="0" y1="0" x2="0" y2="1"><stop offset="0" stop-color="#fbf6d2"/><stop offset="1" stop-color="#dccb84"/></linearGradient>
    <linearGradient id="gPap" x1="0" y1="0" x2="1" y2="0"><stop offset="0" stop-color="#8cc4d8"/><stop offset="0.5" stop-color="#d8f0f8"/><stop offset="1" stop-color="#b8c8f0"/></linearGradient>
  </defs>
  <!-- back -->
  <circle cx="18.4" cy="68.3" r="10.7" fill="url(#gBack)"/>
  <path d="M11 62.5 A9 9 0 0 1 20 59" fill="none" stroke="#e8fbff" stroke-width="2" opacity="0.75" stroke-linecap="round"/>
  <path d="M26.1 68.1H12M18.1 62.6L11.8 68.1L18.1 74" fill="none" stroke="#f2fdff" stroke-width="2.1" stroke-linecap="round" stroke-linejoin="round"/>
  <!-- setup gears -->
  <g stroke="#f6f2f2" fill="none">
    <circle cx="118.1" cy="71.1" r="4.7" stroke-width="2.2"/>
    <circle cx="118.1" cy="71.1" r="6.6" stroke-width="3" stroke-dasharray="2.2 2.984" stroke-dashoffset="1.1"/>
    <circle cx="127.2" cy="62.3" r="2.7" stroke-width="1.5"/>
    <circle cx="127.2" cy="62.3" r="3.9" stroke-width="2" stroke-dasharray="1.4 1.663" stroke-dashoffset="0.7"/>
  </g>
  <circle cx="118.1" cy="71.1" r="3.7" fill="#8a0a14"/><circle cx="118.1" cy="71.1" r="1.5" fill="#520208"/>
  <circle cx="127.2" cy="62.3" r="2" fill="#7c0a14"/>
  <!-- data eye -->
  <rect x="213.6" y="58" width="20.6" height="20.6" fill="#070d18"/>
  <path d="M213.6 63V58H234.2V63M213.6 73.6V78.6H234.2V73.6" fill="none" stroke="#8c98a4" stroke-width="1.1"/>
  <ellipse cx="223.7" cy="68.1" rx="10.8" ry="5.6" fill="url(#gEye)"/>
  <circle cx="223.1" cy="68.5" r="3.9" fill="#0c2a4a"/>
  <circle cx="223.1" cy="68.9" r="2.1" fill="#04101e"/>
  <circle cx="222" cy="66.9" r="1.1" fill="#bfeaf6"/>
  <!-- cursors -->
  <path d="M315.2 62L319.6 57.6V59.4H322.2V64.6H319.6V66.4Z" fill="#ffb81c"/>
  <path d="M337 62L332.6 57.6V59.4H330V64.6H332.6V66.4Z" fill="#ffb81c"/>
  <path d="M323.6 57.5V79.4M328.7 57.5V79.4" stroke="#f2b27c" stroke-width="1" fill="none"/>
  <path d="M315.5 71.8L320.2 66.4L328.7 73.9L336.8 65.6" fill="none" stroke="#a4c6ee" stroke-width="1.9" stroke-linejoin="round"/>
  <rect x="315.3" y="76.1" width="21.6" height="2.4" fill="#8cc4e4"/>
  <circle cx="323.6" cy="77.3" r="1.5" fill="#ffb42a"/><circle cx="328.7" cy="77.3" r="1.5" fill="#ffb42a"/>
  <!-- refresh -->
  <path d="M429.9 64L436 58L441 64H438.4V72.5Q438.4 76 441.8 77.8Q433.9 78.5 433.9 72.5V64Z" fill="url(#gGrn)"/>
  <path d="M449.6 72.6L444.3 78.8L439.6 72.6H441.4V64Q441.4 60.4 438 59.2Q445.7 58.3 445.7 64V72.6Z" fill="url(#gBlu)"/>
  <!-- folder -->
  <path d="M546 59.6Q546 58.4 547.2 58.4H551.4Q552.4 58.4 552.6 59.4L552.9 61.3H561.6Q562.8 61.3 562.8 62.5V75.5Q562.8 76.7 561.6 76.7H547.2Q546 76.7 546 75.5Z" fill="#f7c31a"/>
  <path d="M544.2 66.7Q544.2 65.5 545.4 65.5H559Q560.2 65.5 560.2 66.7V75.5Q560.2 76.7 559 76.7H546.2Q545 76.7 544.9 75.5Z" fill="url(#gFold)"/>
  <!-- print -->
  <path d="M645.6 66.6Q645.6 65.2 647 65.2H664.2Q665.6 65.2 665.6 66.6V77.4Q665.6 78.8 664.2 78.8H647Q645.6 78.8 645.6 77.4Z" fill="url(#gTray)"/>
  <path d="M650 65.2H661V71.6H650Z" fill="#16202a"/>
  <path d="M650.6 58.6H657.6L660.4 61.4V70.6H650.6Z" fill="url(#gPap)"/>
  <path d="M657.6 58.6V61.4H660.4Z" fill="#6a86c8"/>
  <path d="M652.4 64.2H658.6M652.4 66.2H658.6M652.4 68.2H658.6" stroke="#5a8ab8" stroke-width="0.8"/>
  <rect x="652" y="60" width="3" height="2.6" fill="#6aa0b8" opacity="0.7"/>
  <!-- power -->
  <circle cx="890.4" cy="68.1" r="10.6" fill="url(#gPow)"/>
  <path d="M884.3 62.2L897 74.4M897 62.2L884.6 74.4" stroke="#fbeaea" stroke-width="1.9" stroke-linecap="round"/>
</svg>

<svg width="1000" height="750" viewBox="0 0 1000 750">
<defs>
<radialGradient id="gEyeW" cx="0.5" cy="0.5" r="0.5"><stop offset="0" stop-color="#ffffff"/><stop offset="0.6" stop-color="#eeeeee"/><stop offset="0.85" stop-color="#8c8c8c"/><stop offset="1" stop-color="#3a3a3a"/></radialGradient>
<linearGradient id="gWb" x1="0" y1="0" x2="0" y2="1"><stop offset="0" stop-color="#f6f5fa"/><stop offset="0.5" stop-color="#f1eff6"/><stop offset="0.51" stop-color="#e0dcea"/><stop offset="1" stop-color="#efecf8"/></linearGradient>
<linearGradient id="gDk" x1="0" y1="0" x2="0" y2="1"><stop offset="0" stop-color="#575757"/><stop offset="0.49" stop-color="#3e3e3e"/><stop offset="0.5" stop-color="#06090e"/><stop offset="1" stop-color="#1c2a3a"/></linearGradient>
<linearGradient id="gPlay" x1="0" y1="0" x2="1" y2="0"><stop offset="0" stop-color="#1f8a32"/><stop offset="0.4" stop-color="#3bb04c"/><stop offset="1" stop-color="#2a9a3c"/></linearGradient>
<linearGradient id="gRec" x1="0" y1="0" x2="0" y2="1"><stop offset="0" stop-color="#a82030"/><stop offset="1" stop-color="#d83846"/></linearGradient>
<linearGradient id="gThumb" x1="0" y1="0" x2="0" y2="1"><stop offset="0" stop-color="#46b84e"/><stop offset="0.19" stop-color="#58c060"/><stop offset="0.2" stop-color="#eaf6ea"/><stop offset="0.7" stop-color="#f4f8f4"/><stop offset="1" stop-color="#8ed892"/></linearGradient>
</defs>
<path d="M46.0 423.0V418.0H65.6V423.0M46.0 432.8V437.8H65.6V432.8" fill="none" stroke="#e8ea5a" stroke-width="2"/>
<ellipse cx="55.6" cy="427.9" rx="11" ry="5.9" fill="url(#gEyeW)"/>
<circle cx="55.6" cy="428.2" r="4.2" fill="#2a2a2a"/>
<circle cx="55.8" cy="428.6" r="2.6" fill="#050505"/>
<circle cx="54" cy="426.5" r="1.4" fill="#e0e0e0"/>
<path d="M46.0 460.2V455.2H65.6V460.2M46.0 470.0V475.0H65.6V470.0" fill="none" stroke="#c2c2c2" stroke-width="2"/>
<ellipse cx="55.6" cy="465.1" rx="11" ry="5.9" fill="url(#gEyeW)"/>
<circle cx="55.6" cy="465.4" r="4.2" fill="#2a2a2a"/>
<circle cx="55.8" cy="465.8" r="2.6" fill="#050505"/>
<circle cx="54" cy="463.7" r="1.4" fill="#e0e0e0"/>
<path d="M46.0 497.4V492.4H65.6V497.4M46.0 507.2V512.2H65.6V507.2" fill="none" stroke="#c2c2c2" stroke-width="2"/>
<ellipse cx="55.6" cy="502.3" rx="11" ry="5.9" fill="url(#gEyeW)"/>
<circle cx="55.6" cy="502.6" r="4.2" fill="#2a2a2a"/>
<circle cx="55.8" cy="503.0" r="2.6" fill="#050505"/>
<circle cx="54" cy="500.9" r="1.4" fill="#e0e0e0"/>
<path d="M46.0 534.6V529.6H65.6V534.6M46.0 544.4V549.4H65.6V544.4" fill="none" stroke="#c2c2c2" stroke-width="2"/>
<ellipse cx="55.6" cy="539.5" rx="11" ry="5.9" fill="url(#gEyeW)"/>
<circle cx="55.6" cy="539.8" r="4.2" fill="#2a2a2a"/>
<circle cx="55.8" cy="540.2" r="2.6" fill="#050505"/>
<circle cx="54" cy="538.1" r="1.4" fill="#e0e0e0"/>
<g fill="none" stroke="#efe62e" stroke-linecap="round" stroke-linejoin="round">
<path d="M235.3 427.8H244" stroke-width="1.9"/>
<path d="M247.8 421.2V434.6" stroke-width="1.7"/>
<path d="M247.6 423.4L243.6 427.8L247.6 432Z" stroke-width="1.5" fill="#efe62e"/>
<path d="M247.8 425.7H260.4Q262.6 425.7 262.6 427.8Q262.6 429.9 260.4 429.9H247.8" stroke-width="1.5"/>
<path d="M245 427.8H261" stroke-width="0.9"/>
<path d="M263.9 425.6L265.6 427.6L263.9 429.6M266.2 425.6L267.9 427.6L266.2 429.6" stroke-width="1"/>
<path d="M267.6 426.4Q270.6 426.6 270.2 429.4Q269.8 431.4 267.2 431.6Q264.8 432 265.6 434Q266.2 435.6 268.6 435.6H273.8" stroke-width="1.5"/>
</g>
<path d="M471.8 423.5H485.4" stroke="#d8d8d8" stroke-width="1" stroke-dasharray="1.4 1.6"/>
<path d="M472 434.6L472.6 431 L473.2 430.6 L473.8 426.6 Q474.6 425.4 475.4 426.6 L476 430.6 Q477 432.6 478 430.6 L478.8 427.4 Q480.8 423.6 483 427.4 L484.4 431 L485.2 434.6Z" fill="#bcbcbc"/>
<path d="M907.3 434.2H909.6Q911.6 434 912.6 431.8L915.4 424Q916.4 421.6 918.2 421.4H920.8" fill="none" stroke="#e6e86c" stroke-width="1.3"/>
<circle cx="34.3" cy="645.4" r="17.6" fill="url(#gDk)" stroke="#3c4046" stroke-width="0.8"/>
<circle cx="97.0" cy="645.4" r="17.6" fill="url(#gDk)" stroke="#3c4046" stroke-width="0.8"/>
<g fill="#8b8f97"><path d="M24 641.2Q24 639.8 25.4 639.8H29.4L30.6 638.2H36L37.2 639.8H43.4Q44.8 639.8 44.8 641.2V651.6Q44.8 653 43.4 653H25.4Q24 653 24 651.6Z"/></g>
<circle cx="34.2" cy="649.6" r="5.6" fill="#8b8f97"/><circle cx="34.2" cy="649.6" r="4.2" fill="#1a1e26"/><path d="M30.4 650.4Q34.2 646 38 650.4Q34.2 656 30.4 650.4Z" fill="#8b8f97"/>
<path d="M34.3 631.2V635.6M28 632.6L30.2 636.2M40.6 632.6L38.4 636.2" stroke="#7c8088" stroke-width="1.4" stroke-linecap="round"/>
<rect x="87.6" y="636.9" width="19" height="18" rx="1" fill="#8a8e9a"/>
<circle cx="159.4" cy="645.2" r="20.2" fill="#24224e"/>
<circle cx="159.4" cy="645.2" r="19.3" fill="url(#gWb)"/>
<path d="M151.6 635.6V654.8L170.8 645.2Z" fill="url(#gPlay)" stroke="#1d7d2e" stroke-width="0.8" stroke-linejoin="round"/>
<circle cx="221.6" cy="645.2" r="20.2" fill="#24224e"/>
<circle cx="221.6" cy="645.2" r="19.3" fill="url(#gWb)"/>
<circle cx="221.6" cy="645.7" r="9.6" fill="url(#gRec)" stroke="#9a2430" stroke-width="0.6"/>
<circle cx="408.2" cy="645.2" r="20.2" fill="#24224e"/>
<circle cx="408.2" cy="645.2" r="19.3" fill="url(#gWb)"/>
<path d="M408.4 633.8L396.8 645.2L408.4 656.6Z" fill="#4b6794"/>
<path d="M417.8 633.6L405.4 645.2L417.8 656.8Z" fill="#4b6794" stroke="#f1eff6" stroke-width="1.3"/>
<circle cx="470.6" cy="645.2" r="20.2" fill="#24224e"/>
<circle cx="470.6" cy="645.2" r="19.3" fill="url(#gWb)"/>
<path d="M476 633.8V656L462.8 645.2Z" fill="#4b6794"/>
<rect x="501.2" y="631.8" width="190" height="4.4" rx="1" fill="#f2f2ea" stroke="#8c8c84" stroke-width="0.5"/>
<rect x="506.4" y="648" width="1.1" height="3.8" fill="#9c9c9c"/>
<rect x="525.7" y="648" width="1.1" height="3.8" fill="#9c9c9c"/>
<rect x="544.7" y="648" width="1.1" height="3.8" fill="#9c9c9c"/>
<rect x="563.7" y="648" width="1.1" height="3.8" fill="#9c9c9c"/>
<rect x="582.7" y="648" width="1.1" height="3.8" fill="#9c9c9c"/>
<rect x="601.7" y="648" width="1.1" height="3.8" fill="#9c9c9c"/>
<rect x="620.7" y="648" width="1.1" height="3.8" fill="#9c9c9c"/>
<rect x="639.7" y="648" width="1.1" height="3.8" fill="#9c9c9c"/>
<rect x="658.7" y="648" width="1.1" height="3.8" fill="#9c9c9c"/>
<rect x="677.7" y="648" width="1.1" height="3.8" fill="#9c9c9c"/>
<rect x="683.9" y="648" width="1.1" height="3.8" fill="#9c9c9c"/>
<path d="M581.2 625.2Q581.2 624 582.4 624H590.8Q592 624 592 625.2V638.6L586.6 644.8L581.2 638.6Z" fill="url(#gThumb)" stroke="#4aa452" stroke-width="0.7"/>
<circle cx="721.4" cy="645.2" r="20.2" fill="#24224e"/>
<circle cx="721.4" cy="645.2" r="19.3" fill="url(#gWb)"/>
<path d="M717 634.4V655.6L729.2 644.9Z" fill="#4b6794"/>
<circle cx="784.1" cy="645.2" r="20.2" fill="#24224e"/>
<circle cx="784.1" cy="645.2" r="19.3" fill="url(#gWb)"/>
<path d="M784.8 634.6L796.8 644.9L784.8 655.3L784.8 651 L791.6 644.9 L784.8 638.8Z" fill="#4b6794"/>
<path d="M774.2 634.6V655.3L786.2 644.9Z" fill="#4b6794" stroke="#f1eff6" stroke-width="1.2"/>
<circle cx="846.6" cy="645.2" r="20.2" fill="#24224e"/>
<circle cx="846.6" cy="645.2" r="19.3" fill="url(#gWb)"/>
<rect x="835.4" y="634.4" width="22.8" height="22.2" rx="1.6" fill="#4b6794" stroke="#33415f" stroke-width="1.5"/>
<rect x="849.4" y="636.2" width="7.2" height="6.6" fill="#f2f1f8"/>
<rect x="837" y="649" width="6.8" height="5.8" fill="#f2f1f8"/>
<path d="M843.8 649L838.6 642.6L843.3 637.4L851.6 645.8" fill="none" stroke="#f2f1f8" stroke-width="1.1" stroke-linejoin="miter"/>
<path d="M843.8 649V651.6H847.2" fill="none" stroke="#f2f1f8" stroke-width="0.9"/>
<path d="M853 643V646.4" fill="none" stroke="#f2f1f8" stroke-width="0.9"/>
<circle cx="971.7" cy="645.2" r="20.2" fill="#24224e"/>
<circle cx="971.7" cy="645.2" r="19.3" fill="url(#gWb)"/>
<path d="M974.6 648.2L981 654.6" stroke="#46648a" stroke-width="4.2" stroke-linecap="round"/>
<circle cx="967.3" cy="640.7" r="7.7" fill="#eeedf6" stroke="#3a4a60" stroke-width="2.6"/>
</svg>
<svg width="1000" height="750" viewBox="0 0 1000 750">
<defs>
<linearGradient id="gAb" x1="0" y1="0" x2="0" y2="1"><stop offset="0" stop-color="#868686"/><stop offset="0.5" stop-color="#585656"/><stop offset="0.535" stop-color="#30323c"/><stop offset="1" stop-color="#2c3c5c"/></linearGradient>
<linearGradient id="gRedB" x1="0" y1="0" x2="0" y2="1"><stop offset="0" stop-color="#d82030"/><stop offset="0.48" stop-color="#c81424"/><stop offset="0.52" stop-color="#5c0c16"/><stop offset="1" stop-color="#6a1420"/></linearGradient>
<linearGradient id="gGrnB" x1="0" y1="0" x2="0" y2="1"><stop offset="0" stop-color="#2cc83a"/><stop offset="0.48" stop-color="#1cae2c"/><stop offset="0.52" stop-color="#0c5a1c"/><stop offset="1" stop-color="#127028"/></linearGradient>
<linearGradient id="gBar" x1="0" y1="0" x2="0" y2="1"><stop offset="0" stop-color="#d8ecff"/><stop offset="0.5" stop-color="#8cc4f8"/><stop offset="1" stop-color="#5a9ae0"/></linearGradient>
<linearGradient id="gOr" x1="0" y1="0" x2="1" y2="1"><stop offset="0" stop-color="#f8c870"/><stop offset="0.5" stop-color="#e89a28"/><stop offset="1" stop-color="#a86410"/></linearGradient>
<linearGradient id="gTan" x1="0" y1="0" x2="0" y2="1"><stop offset="0" stop-color="#f0d090"/><stop offset="1" stop-color="#c89038"/></linearGradient>
<linearGradient id="gArr" x1="0" y1="0" x2="0" y2="1"><stop offset="0" stop-color="#f08a18"/><stop offset="0.5" stop-color="#fcd41c"/><stop offset="1" stop-color="#f4ec28"/></linearGradient>
<linearGradient id="gRC" x1="0" y1="0" x2="0" y2="1"><stop offset="0" stop-color="#f0f6ff"/><stop offset="0.3" stop-color="#e82a1c"/><stop offset="1" stop-color="#c41410"/></linearGradient>
<linearGradient id="gGC" x1="0" y1="0" x2="0" y2="1"><stop offset="0" stop-color="#2a9a48"/><stop offset="0.5" stop-color="#58d428"/><stop offset="1" stop-color="#2cae28"/></linearGradient>
<linearGradient id="gTrayG" x1="0" y1="0" x2="0" y2="1"><stop offset="0" stop-color="#f0f0f0"/><stop offset="1" stop-color="#a8acb0"/></linearGradient>
<linearGradient id="gStart" x1="0" y1="0" x2="0" y2="1"><stop offset="0" stop-color="#5cb85c"/><stop offset="0.12" stop-color="#4aa84a"/><stop offset="0.5" stop-color="#3c983c"/><stop offset="0.9" stop-color="#358a35"/><stop offset="1" stop-color="#2c7a2c"/></linearGradient>
<linearGradient id="gTray2" x1="0" y1="0" x2="0" y2="1"><stop offset="0" stop-color="#1a9cf0"/><stop offset="0.15" stop-color="#1490ec"/><stop offset="0.85" stop-color="#128ce8"/><stop offset="1" stop-color="#0e78d0"/></linearGradient>
<radialGradient id="gChev" cx="0.4" cy="0.35" r="0.7"><stop offset="0" stop-color="#5ab0ff"/><stop offset="1" stop-color="#1458d8"/></radialGradient>
</defs>
<rect x="4.0" y="684.6" width="68.0" height="34" rx="4" fill="url(#gAb)" opacity="0.95"/>
<rect x="87.6" y="684.6" width="67.2" height="34" rx="4" fill="url(#gAb)" opacity="0.95"/>
<rect x="171.7" y="684.6" width="67.2" height="34" rx="4" fill="url(#gAb)" opacity="0.95"/>
<rect x="284.9" y="684.6" width="67.1" height="34" rx="4" fill="url(#gAb)" opacity="0.95"/>
<rect x="367.4" y="684.6" width="68.0" height="34" rx="4" fill="url(#gAb)" opacity="0.95"/>
<path d="M267.5 686V718" stroke="#e8e8e8" stroke-width="1.8" stroke-dasharray="1.7 2"/>
<path d="M891.9 686V718" stroke="#e8e8e8" stroke-width="1.8" stroke-dasharray="1.7 2"/>
<rect x="26.6" y="693.2" width="3" height="6.4" fill="#cdeeee" stroke="#1f6a62" stroke-width="0.9"/>
<path d="M26.8 703V714.9H50V703L38.7 691.8Z" fill="#dafafa" stroke="#1b645c" stroke-width="1.5" stroke-linejoin="round"/>
<path d="M23.2 704.2L38.7 689.6L54.2 704.2" fill="none" stroke="#247268" stroke-width="2.7" stroke-linejoin="round" stroke-linecap="round"/>
<rect x="29.4" y="703" width="8.4" height="5.2" fill="#2f8278"/>
<rect x="41" y="703" width="5.8" height="11.6" fill="#1f6e64"/>
<rect x="105.4" y="687.2" width="31.2" height="30" fill="#dafafa" stroke="#5e9cae" stroke-width="1.2"/>
<rect x="107" y="688.4" width="22" height="3.2" fill="#1c6c84"/>
<rect x="130" y="688" width="5.8" height="3.6" fill="#e23a48"/>
<path d="M113.4 692.4H128.6L121 699.6Z" fill="#8edaf2"/>
<path d="M121 703.2L128.6 710.4H113.4Z" fill="#2aa6d8"/>
<path d="M113.4 692.4L121 699.6L128.6 692.4M113.4 710.4L121 703.2L128.6 710.4" fill="none" stroke="#1a5a6a" stroke-width="0.7"/>
<rect x="106" y="710.4" width="30" height="5.6" fill="#3a8ea4"/>
<rect x="107" y="710.8" width="7.6" height="4" rx="2" fill="#4cb42c"/>
<rect x="190.6" y="687.4" width="16.2" height="4.6" fill="url(#gBar)" stroke="#0c2c5c" stroke-width="1"/>
<rect x="190.6" y="695.6" width="16.2" height="4.9" fill="url(#gBar)" stroke="#0c2c5c" stroke-width="1"/>
<rect x="203.7" y="703.7" width="15.3" height="4.5" fill="url(#gTan)" stroke="#2a1c08" stroke-width="0.9"/>
<rect x="203.7" y="711.8" width="15.3" height="4.5" fill="url(#gTan)" stroke="#2a1c08" stroke-width="0.9"/>
<rect x="190.6" y="703.7" width="12.8" height="4.5" fill="url(#gBar)" stroke="#0c2c5c" stroke-width="1"/>
<rect x="190.6" y="711.8" width="12.8" height="4.5" fill="url(#gBar)" stroke="#0c2c5c" stroke-width="1"/>
<path d="M189.4 691H207.8L198.4 700.2Z" fill="url(#gOr)" stroke="#2a1804" stroke-width="0.9" stroke-linejoin="round"/>
<path d="M208.2 697.4V715.4L217.4 706.4Z" fill="url(#gOr)" stroke="#2a1804" stroke-width="0.9" stroke-linejoin="round"/>
<path d="M302.6 697.4Q302 691.6 307.6 690.6Q311 688 318.4 687.6Q326 687.6 329.4 690.2Q334.8 691.2 334.4 697.6Q333.6 699.6 330.4 699.6L325 699.4Q322.6 698.6 322.4 700.4H314.6Q314.2 698.6 312 699.4L306.6 699.6Q303 699.6 302.6 697.4Z" fill="url(#gRC)"/>
<path d="M310.6 690.4Q318.4 686.4 326.4 690.4Q318.4 692.4 310.6 690.4Z" fill="#cfe8ff"/>
<path d="M302.6 708.4Q303.4 705.2 308.4 705L312.6 704.2H324.4L328.6 705Q333.6 705.2 334.4 708.4L334.6 712.6Q334.4 715.4 330.4 715.4H306.6Q302.6 715.4 302.4 712.6Z" fill="url(#gGC)"/>
<path d="M315.6 695H321.4V704.2H325L318.5 710.6L312 704.2H315.6Z" fill="url(#gArr)"/>
<circle cx="308.3" cy="697.0" r="3" fill="#0e3a6a"/><circle cx="308.3" cy="697.0" r="1.9" fill="#48b0e0"/>
<circle cx="327.7" cy="697.0" r="3" fill="#0e3a6a"/><circle cx="327.7" cy="697.0" r="1.9" fill="#48b0e0"/>
<circle cx="308.3" cy="712.6" r="3" fill="#0e3a6a"/><circle cx="308.3" cy="712.6" r="1.9" fill="#48b0e0"/>
<circle cx="327.7" cy="712.6" r="3" fill="#0e3a6a"/><circle cx="327.7" cy="712.6" r="1.9" fill="#48b0e0"/>
<path d="M390 690.2Q390 688.8 391.4 688.8H394.4L395.4 690.2H411Q412.4 690.2 412.4 691.6V708.4H390Z" fill="#c4c6c8"/>
<rect x="391.6" y="691.6" width="19.4" height="16.6" fill="#dcdede"/>
<path d="M393.6 707V701Q393.6 699.6 395.2 699.4L397.6 696.4Q401.4 695.4 405.2 696.4L407.6 699.4Q409.2 699.6 409.2 701V707Z" fill="#333537"/>
<path d="M396.4 699.6L398.2 697.2Q401.4 696.4 404.6 697.2L406.4 699.6Z" fill="#6a6e72"/>
<rect x="394.6" y="703.6" width="3.8" height="2.2" fill="#f0f0f0"/><rect x="404.4" y="703.6" width="3.8" height="2.2" fill="#f0f0f0"/>
<path d="M385.4 708.2H417L411 715.8H391.8Z" fill="url(#gTrayG)"/>
<rect x="903.6" y="685.8" width="37" height="33" rx="4" fill="url(#gRedB)"/>
<path d="M916.6 688.2L927 698M927 688.2L916.6 698" stroke="#fdf4f4" stroke-width="1.9"/>
<path d="M907.6 703.4Q907.6 701.6 909.6 701.6H935.6Q937 701.6 937 703V706H909L907.6 705Z" fill="#9c8e90"/>
<path d="M909 701.8H936" stroke="#e0d0d0" stroke-width="1" stroke-dasharray="1.2 1.4"/>
<path d="M909.6 706.2H937V712.6Q937 714.2 935.4 714.2H919L915.6 712 H910.4Z" fill="#c01c2a" stroke="#e05a62" stroke-width="0.6"/>
<rect x="920" y="708" width="15.4" height="4.6" rx="2" fill="#2a1a1e"/>
<circle cx="924.4" cy="710.3" r="1.1" fill="#8a8e92"/>
<circle cx="927.8" cy="710.3" r="1.1" fill="#8a8e92"/>
<circle cx="931.2" cy="710.3" r="1.1" fill="#8a8e92"/>
<path d="M910 717.6H934" stroke="#b8a8a8" stroke-width="1" stroke-dasharray="1 1.4"/>
<rect x="952" y="685" width="37.4" height="33.8" rx="4" fill="url(#gGrnB)"/>
<g stroke="#f0fff0" stroke-width="1.3" fill="none"><path d="M958.6 691.5H981"/><path d="M964.4 691.5Q966.4 688.2 969 688.2H972.6"/><path d="M968 691.5Q970 694.8 972.4 694.8H975.4"/></g>
<path d="M956.6 691.5L958.8 689.6L961 691.5L958.8 693.4Z" fill="#f0fff0"/><path d="M980.4 688.8L984.6 691.5L980.4 694.2Z" fill="#f0fff0"/><circle cx="976" cy="694.8" r="1.3" fill="#f0fff0"/><rect x="972.2" y="687.2" width="2.2" height="2" fill="#f0fff0"/>
<rect x="958" y="701.4" width="26.6" height="13.8" rx="1.2" fill="#b81424" stroke="#d84a54" stroke-width="0.7"/>
<path d="M957 700.2H985" stroke="#7a8a7a" stroke-width="1" stroke-dasharray="1 1.4"/>
<rect x="959.8" y="703.3" width="1.5" height="1.5" fill="#f4e8e8"/>
<rect x="972.4" y="703.4" width="1.3" height="1.3" fill="#e8b0a0"/>
<rect x="959.8" y="706.1" width="1.5" height="1.5" fill="#f4e8e8"/>
<rect x="972.4" y="706.2" width="1.3" height="1.3" fill="#e8b0a0"/>
<rect x="959.8" y="708.9" width="1.5" height="1.5" fill="#f4e8e8"/>
<rect x="972.4" y="709.0" width="1.3" height="1.3" fill="#e8b0a0"/>
<rect x="959.8" y="711.7" width="1.5" height="1.5" fill="#f4e8e8"/>
<rect x="972.4" y="711.8" width="1.3" height="1.3" fill="#e8b0a0"/>
<circle cx="966.5" cy="708.5" r="2.7" fill="#b4b4b4" stroke="#6a5a5a" stroke-width="0.6"/>
<rect x="975.6" y="703.4" width="7.4" height="10" fill="#5c74b8" stroke="#e8a0a0" stroke-width="0.6"/>
<path d="M959 717.6H984" stroke="#9ac89a" stroke-width="1" stroke-dasharray="1 1.4"/>
<rect x="105.2" y="724.2" width="155" height="23.6" rx="2.5" fill="#1e52b8" stroke="#143c96" stroke-width="1"/>
<rect x="115.4" y="729.2" width="15.2" height="14" fill="#f4f4f4" stroke="#20283c" stroke-width="1"/>
<path d="M117.6 734.4L120.4 733.6L123 736.4L125.6 733.6L128.6 734.4L126 735.8L123 738.4L120 735.8Z" fill="#2a1a1a"/>
<path d="M0 721.4H84Q94 723 94.6 735.6Q94 748 84 750H0Z" fill="url(#gStart)"/>
<path d="M0 722H84Q91 723 93.4 730" fill="none" stroke="#8ad88a" stroke-width="1" opacity="0.6"/>
<path d="M12.6 729.2Q15.6 727.6 18.8 729.4L17.6 734.8Q14.6 733.2 11.4 734.6Z" fill="#e8542c"/>
<path d="M20 729.8Q23 731.4 26.4 729.6L25.2 735Q22 736.6 18.8 735Z" fill="#7cc040"/>
<path d="M11 736Q14.2 734.6 17.4 736.2L16.2 741.6Q13 740 9.8 741.4Z" fill="#3a78e0"/>
<path d="M18.4 736.6Q21.6 738.2 24.8 736.4L23.6 741.8Q20.4 743.4 17.2 741.8Z" fill="#f8c428"/>
<rect x="909.6" y="721.4" width="90.4" height="28.6" fill="url(#gTray2)"/>
<rect x="908.6" y="721.4" width="1.2" height="28.6" fill="#0c3c98"/>
<circle cx="910.4" cy="735.6" r="8.4" fill="url(#gChev)" stroke="#a8d4ff" stroke-width="0.9"/>
<path d="M912.2 731.8L908.4 735.6L912.2 739.4" fill="none" stroke="#fff" stroke-width="2" stroke-linecap="round" stroke-linejoin="round"/>
<rect x="924" y="729.4" width="8.6" height="12.4" rx="2" fill="#1c2cb8"/>
<rect x="925.4" y="727.8" width="5.8" height="5" rx="1.4" fill="#c8c8d0"/>
<circle cx="928.3" cy="731" r="1.3" fill="#e04a3a"/>
<rect x="925.2" y="735" width="2" height="5.6" fill="#4a5ce0"/>
</svg>
<div class="abs" style="left:33.5px;top:726px;font-size:17px;font-weight:bold;font-style:italic;color:#fff;line-height:20px;letter-spacing:-0.2px;text-shadow:1px 1px 1px rgba(0,0,0,0.45)">start</div>
<div class="abs" style="left:135px;top:729.5px;font-size:11px;color:#fff;line-height:13px;white-space:nowrap;letter-spacing:-0.42px">Diagnostic Suite</div>
<div class="abs" style="left:944.5px;top:729.5px;font-size:11px;color:#fff;line-height:13px;white-space:nowrap;letter-spacing:-0.3px">5:28 PM</div>

</div></body></html>
